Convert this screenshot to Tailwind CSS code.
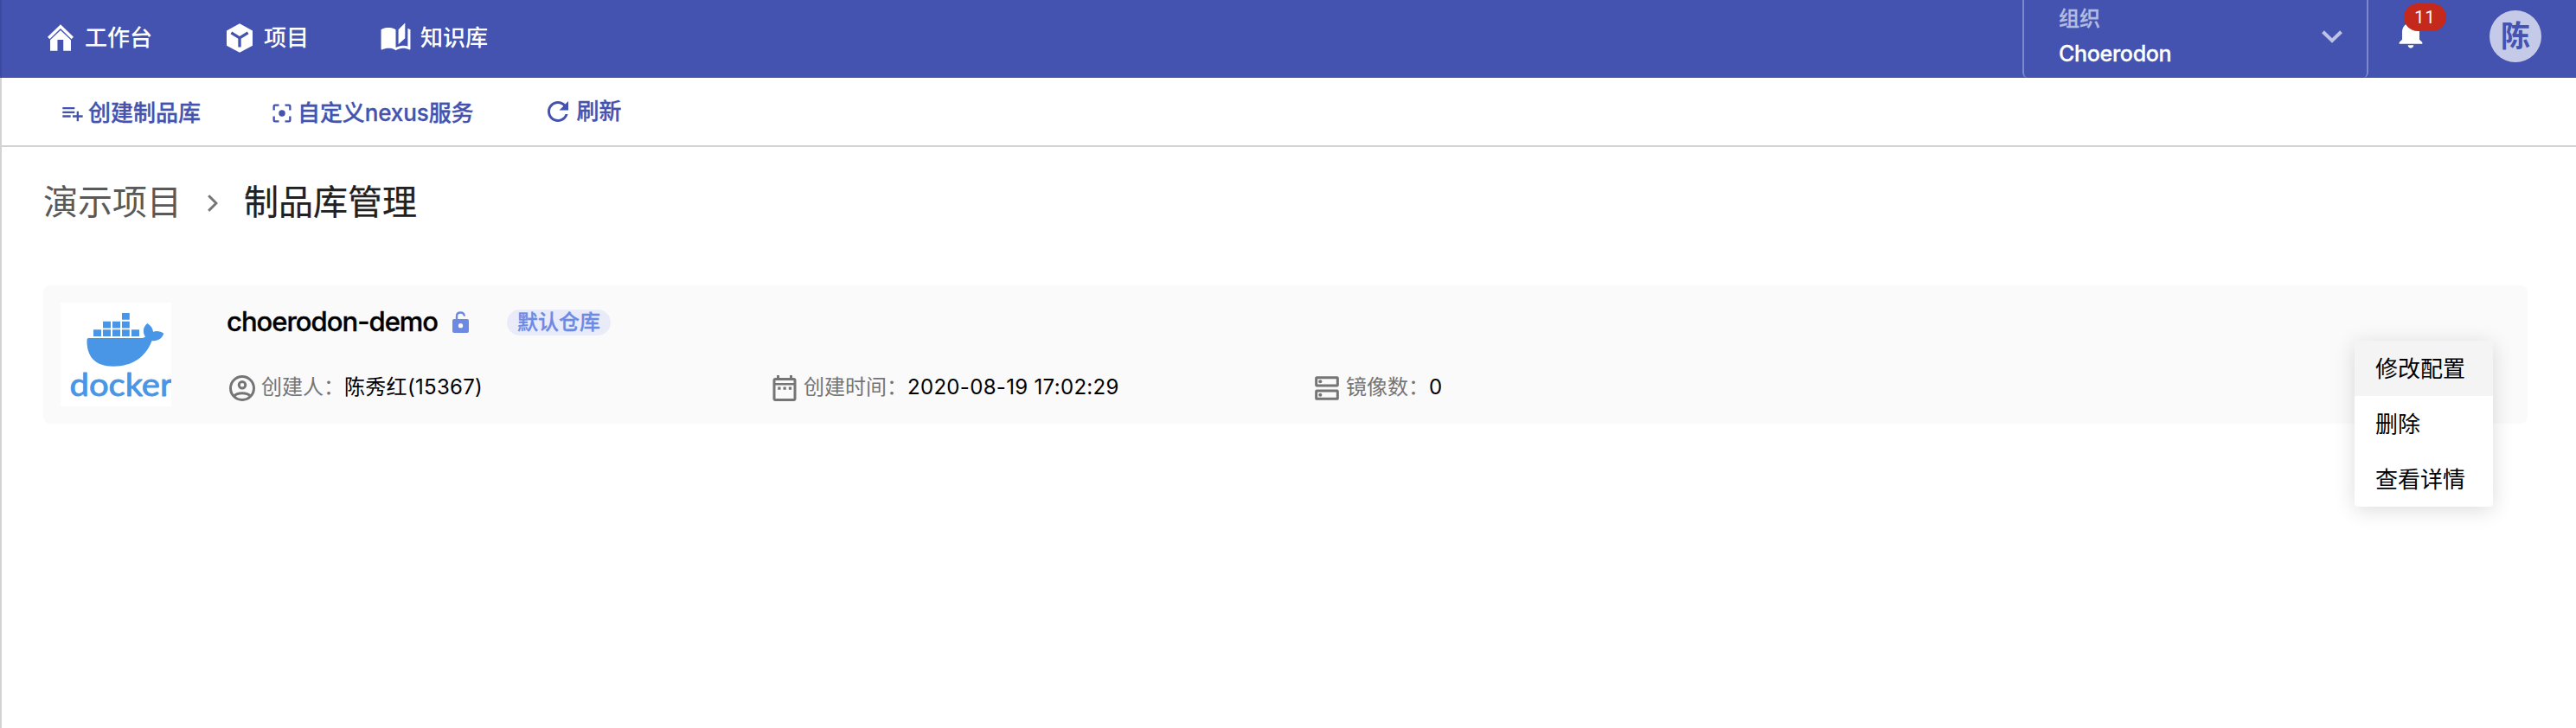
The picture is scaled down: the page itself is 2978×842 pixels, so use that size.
<!DOCTYPE html>
<html lang="zh-CN">
<head>
<meta charset="utf-8">
<title>制品库管理</title>
<script src="https://cdn.jsdelivr.net/npm/@tailwindcss/browser@4"></script>
</head>
<body class="h-[842px] w-[2978px] overflow-hidden bg-white font-['Inter','Noto_Sans_CJK_SC',sans-serif] text-black">
<header class="flex h-[90px] border-l-2 border-[#3c4a9f] bg-[#4353af] text-[26px] font-medium text-white">
  <nav class="flex h-[87px] items-center leading-none">
    <a class="ml-[53px] flex items-center gap-[13px]">
      <svg class="h-[31px] w-[30px]" viewBox="0 0 89 91" fill="currentColor"><path d="M44.500 0L89 43l-7 8L44.500 14 7 51l-7-8z"/><path d="M44.500 20L80 54v37H54V53H34v38H9V54z"/></svg>
      <span>工作台</span>
    </a>
    <a class="ml-[86px] flex items-center gap-[13px]">
      <svg class="h-[34px] w-[30px]" viewBox="0 0 90 101"><path fill="currentColor" d="M45 0l45 25v52l-45 24L0 77V25z"/><path fill="none" stroke="#4353af" stroke-width="10" d="M16 32l29 18 29-18M45 50v32"/></svg>
      <span>项目</span>
    </a>
    <a class="ml-[82px] flex items-center gap-[10px]">
      <svg class="h-[37px] w-[37px]" viewBox="0 0 24 24" fill="currentColor"><path d="M19 1l-5 5v11l5-4.500V1zM1 6v14.650c0 .25.25.5.5.5.1 0 .15-.05.25-.05C3.100 20.450 5.050 20 6.500 20c1.950 0 4.050.4 5.500 1.500V6c-1.450-1.100-3.550-1.500-5.500-1.500S2.450 4.900 1 6zm22 13.500V6c-.6-.45-1.250-.75-2-1v13.500c-1.100-.35-2.300-.5-3.500-.5-1.700 0-4.150.65-5.500 1.500v2c1.350-.85 3.800-1.500 5.500-1.500 1.650 0 3.350.3 4.750 1.050.1.05.15.05.25.05.25 0 .5-.25.5-.5v-1.600z"/></svg>
      <span>知识库</span>
    </a>
  </nav>
  <div class="ml-auto flex h-[90px] w-[400px] rounded-b-[6px] border-x-2 border-[#7d89cc] pl-10">
    <div class="pt-[8px]">
      <div class="text-[24px] leading-[28px] text-[#b4bbe0] [-webkit-text-stroke:0.3px]">组织</div>
      <div class="mt-[10px] text-[25px] leading-[32px] tracking-[-0.3px] [-webkit-text-stroke:0.3px]">Choerodon</div>
    </div>
    <svg class="mt-[35px] mr-[28px] ml-auto h-[15px] w-[24px]" viewBox="0 0 24 15" fill="none" stroke="#bdc3e4" stroke-width="4"><path d="M1.500 1.800L12 12l10.500-10.200"/></svg>
  </div>
  <div class="relative mt-[19px] ml-[29px] h-[40px] w-[40px]">
    <svg class="h-[40px] w-[40px]" viewBox="0 0 24 24" fill="currentColor"><path d="M12 22c1.100 0 2-.9 2-2h-4c0 1.100.89 2 2 2zm6-6v-5c0-3.070-1.640-5.640-4.500-6.320V4c0-.83-.67-1.500-1.500-1.500s-1.500.67-1.500 1.500v.68C7.630 5.360 6 7.920 6 11v5l-2 2v1h16v-1l-2-2z"/></svg>
    <span class="absolute -top-[15px] left-[12px] flex h-[32px] w-[49px] items-center justify-center rounded-full bg-[#c4291c] font-['Roboto',sans-serif] text-[20px] font-normal tracking-[1px]">11</span>
  </div>
  <div class="mt-[12px] mr-[40px] ml-[71px] flex h-[60px] w-[60px] items-center justify-center rounded-full bg-[#c5cae9] text-[34px] leading-none font-bold text-[#4353af]">陈</div>
</header>
<main class="h-[752px] border-l-2 border-[#d3d3d3]">
  <div class="flex h-[80px] items-start border-b-2 border-[#d3d3d3] text-[26px] leading-[36px] font-medium text-[#4353af]">
    <a class="mt-[23px] ml-[68px] flex items-center gap-[4px]">
      <svg class="h-[28px] w-[28px]" viewBox="0 0 24 24" fill="currentColor"><path d="M14 10H2v2h12v-2zm0-4H2v2h12V6zm4 8v-4h-2v4h-4v2h4v4h2v-4h4v-2h-4zM2 16h8v-2H2v2z"/></svg>
      <span class="[-webkit-text-stroke:0.3px]">创建制品库</span>
    </a>
    <a class="mt-[23px] ml-[80px] flex items-center gap-[4px]">
      <svg class="h-[28px] w-[28px]" viewBox="0 0 24 24" fill="none" stroke="currentColor" stroke-width="2"><circle cx="12" cy="12" r="3.200" fill="currentColor" stroke="none"/><path d="M4 9V5q0-1 1-1h4M15 4h4q1 0 1 1v4M20 15v4q0 1-1 1h-4M9 20H5q-1 0-1-1v-4"/></svg>
      <span class="tracking-[-0.1px] [-webkit-text-stroke:0.3px]">自定义nexus服务</span>
    </a>
    <a class="mt-[21px] ml-[79px] flex items-center gap-[4px]">
      <svg class="h-[36px] w-[36px]" viewBox="0 0 24 24" fill="currentColor"><path d="M17.650 6.350C16.200 4.900 14.210 4 12 4c-4.420 0-7.990 3.580-7.990 8s3.570 8 7.990 8c3.730 0 6.840-2.550 7.730-6h-2.080c-.82 2.330-3.040 4-5.650 4-3.310 0-6-2.690-6-6s2.690-6 6-6c1.660 0 3.140.69 4.220 1.780L13 11h7V4l-2.350 2.350z"/></svg>
      <span class="[-webkit-text-stroke:0.3px]">刷新</span>
    </a>
  </div>
  <div class="flex h-[128px] items-center pl-[48px] text-[40px] leading-none text-[#595959]">
    <span>演示项目</span>
    <svg class="mt-[2px] ml-[30px] h-[20px] w-[12px]" viewBox="0 0 12 20" fill="none" stroke="#757575" stroke-width="3"><path d="M1.200 1.200L10 10l-8.800 8.800"/></svg>
    <span class="ml-[30px] text-[#212121] [-webkit-text-stroke:0.25px]">制品库管理</span>
  </div>
  <section class="mt-[32px] ml-[48px] flex h-[160px] w-[2872px] rounded-[8px] bg-[#fafafa]">
    <svg class="m-5 h-[120px] w-[128px] shrink-0 bg-white" viewBox="0 0 128 120" fill="#4996e6">
      <path d="M71 12h8.800v7.800H71zM49 21.700h9v7.800h-9zM60 21.700h9v7.800h-9zM71 21.700h8.800v7.800H71zM38 31.200h9V39h-9zM49 31.200h9V39h-9zM60 31.200h9V39h-9zM71 31.200h8.800V39H71zM82 31.200h9V39h-9z"/>
      <path d="M32.500 41H92c3 0 4.500-.4 6-1.500-3.600-5.600-2.300-11.800 2.300-15.500 4 2.500 6.400 5.500 6.700 9.700 4.500-1.300 8.800-.5 12.300 2-2 6-7 8.800-13.800 8.500C99 61.500 84.500 73.700 61 73.700 39.500 73.700 30 62 30.500 43q0-2 2-2z"/>
      <text x="10.500" y="107.500" font-family="Lato" font-size="36" textLength="119" lengthAdjust="spacingAndGlyphs" stroke="#4996e6" stroke-width="0.900" stroke-linejoin="round">docker</text>
      <circle cx="121.500" cy="106.500" r="1" opacity=".6"/>
    </svg>
    <div class="ml-[44px] flex-1 pt-[22px]">
      <div class="flex h-[40px] items-center">
        <h2 class="-mt-[2px] w-[244px] text-[31px] leading-none font-medium tracking-[-1px] whitespace-nowrap [-webkit-text-stroke:0.3px]">choerodon-demo</h2>
        <svg class="ml-[17px] h-[25px] w-[19px]" viewBox="0 0 57 75"><rect y="27" width="57" height="48" rx="6" fill="#6c8ae4"/><circle cx="28.500" cy="50" r="8" fill="#fafafa"/><path d="M15 28V17q0-12.500 13.500-12.500Q40 4.500 42 17" fill="none" stroke="#6c8ae4" stroke-width="7"/></svg>
        <span class="mt-[2px] ml-[44px] flex h-[30px] w-[120px] items-center justify-center rounded-full bg-[#e9ecf8] text-[24px] leading-none font-medium text-[#6c8ae4] [-webkit-text-stroke:0.3px]">默认仓库</span>
      </div>
      <div class="mt-[38px] flex h-[36px] items-center text-[24px] leading-none text-[#757575]">
        <div class="flex w-[627px] items-center">
          <svg class="mt-[2px] h-[36px] w-[36px]" viewBox="0 0 24 24" fill="none" stroke="currentColor" stroke-width="2"><circle cx="12" cy="12" r="9"/><circle cx="12" cy="9.500" r="2.500"/><path d="M5.500 18.300c3-3.300 10-3.300 13 0"/></svg>
          <span class="ml-[4px]">创建人：</span><span class="tracking-[0.3px] text-black">陈秀红(15367)</span>
        </div>
        <div class="flex w-[627px] items-center">
          <svg class="mt-[2px] h-[36px] w-[36px]" viewBox="0 0 24 24" fill="currentColor"><rect x="4" y="5" width="16" height="16" rx="1" fill="none" stroke="currentColor" stroke-width="2"/><path d="M6 2h2v3H6zM16 2h2v3h-2zM4 8h16v1.700H4zM6.800 11h2.200v2.200H6.800zM11 11h2.200v2.200H11zM15.200 11h2.200v2.200h-2.200z"/></svg>
          <span class="ml-[4px]">创建时间：</span><span class="tracking-[0.32px] text-black">2020-08-19 17:02:29</span>
        </div>
        <div class="flex items-center pl-[4px]">
          <svg class="mt-[2px] h-[28px] w-[28px]" viewBox="0 0 84 84" fill="none" stroke="currentColor" stroke-width="9"><rect x="5" y="5" width="74" height="28" rx="2"/><rect x="5" y="51" width="74" height="28" rx="2"/><circle cx="19" cy="19" r="6" fill="currentColor" stroke="none"/><circle cx="19" cy="65" r="6" fill="currentColor" stroke="none"/></svg>
          <span class="ml-[8px]">镜像数：</span><span class="text-black">0</span>
        </div>
      </div>
    </div>
  </section>
</main>
<ul class="absolute top-[394px] left-[2722px] w-[160px] overflow-hidden rounded-[4px] bg-white text-[26px] leading-[64px] shadow-[0_4px_24px_rgba(0,0,0,0.14)]">
  <li class="h-16 bg-[#f4f4f4] pt-px pl-6">修改配置</li>
  <li class="h-16 pt-px pl-6">删除</li>
  <li class="h-16 pt-px pl-6">查看详情</li>
</ul>
</body>
</html>
